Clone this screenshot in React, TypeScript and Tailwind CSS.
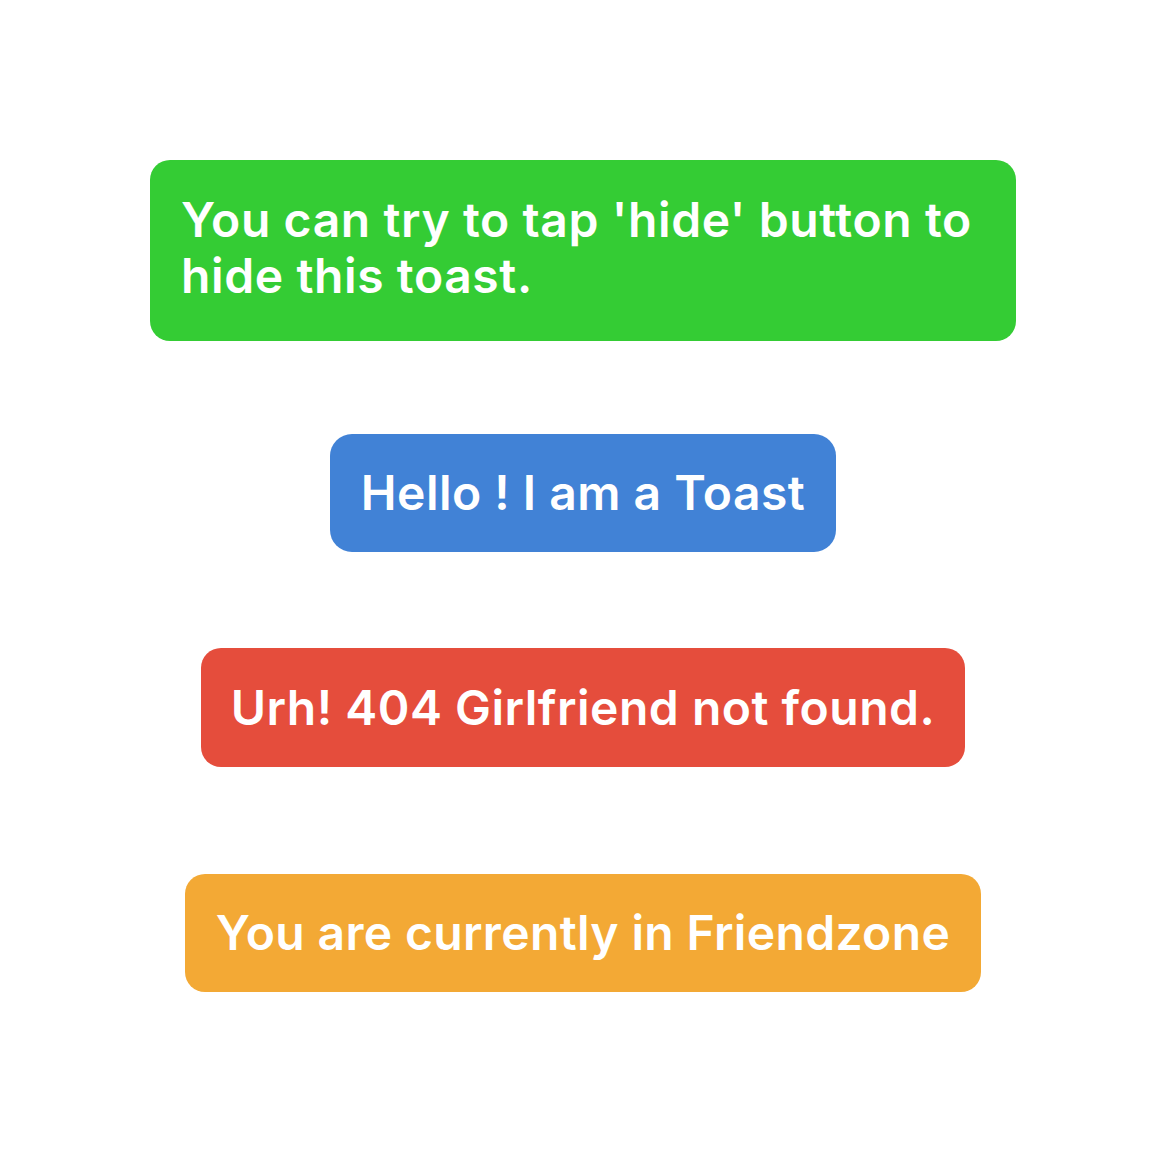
import React from "react";

export default function App() {
  const font = { fontFamily: "Inter, 'Noto Sans', sans-serif" };
  return (
    <div className="w-[1170px] h-[1170px] bg-white flex flex-col items-center pr-[4px]" style={font}>
      <div className="mt-[160px] w-[866px] h-[181px] rounded-[20px] bg-[#34cc34] px-[31px] pt-[32px] text-white font-semibold text-[48px] leading-[56px] tracking-[0.6px]">
        You can try to tap 'hide' button to hide this toast.
      </div>
      <div className="mt-[93px] h-[118px] rounded-[22px] bg-[#4182d6] px-[31px] flex items-center text-white font-semibold text-[48px] leading-[56px] tracking-[0.5px]">
        Hello ! I am a Toast
      </div>
      <div className="mt-[96px] h-[119px] rounded-[20px] bg-[#e54d3c] px-[30px] flex items-center text-white font-semibold text-[48px] leading-[56px] tracking-[0.5px]">
        Urh! 404 Girlfriend not found.
      </div>
      <div className="mt-[107px] h-[118px] rounded-[20px] bg-[#f3a935] px-[31px] flex items-center text-white font-semibold text-[48px] leading-[56px] tracking-[0.35px]">
        You are currently in Friendzone
      </div>
    </div>
  );
}
